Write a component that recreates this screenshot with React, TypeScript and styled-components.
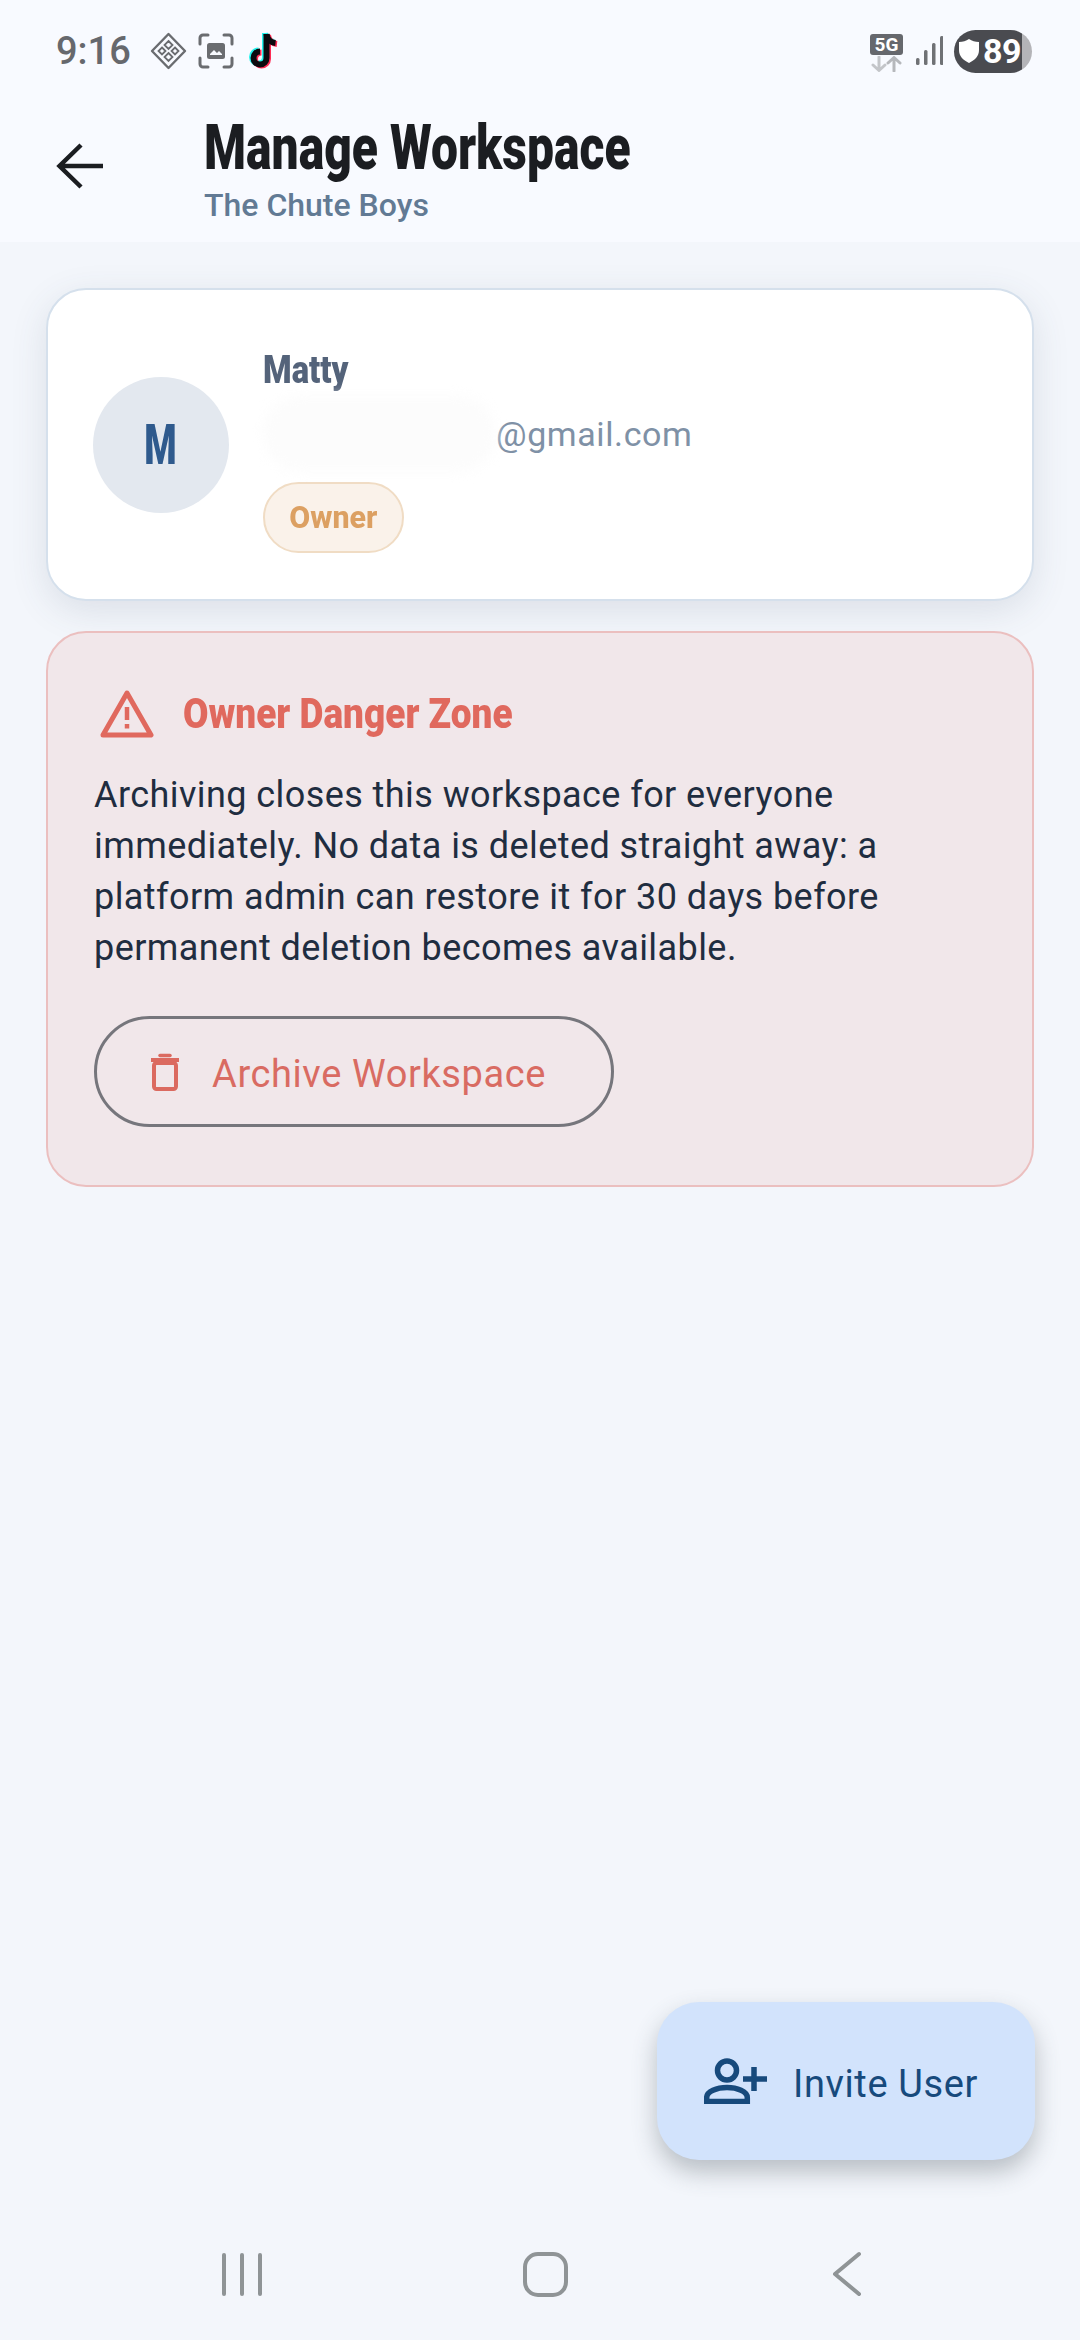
import * as React from 'react';
import {FC} from 'react';
import styled, {createGlobalStyle} from 'styled-components';

const GlobalStyle = createGlobalStyle`
  html, body {
    margin: 0;
    padding: 0;
    background: #f3f6fb;
  }
  * {
    box-sizing: border-box;
  }
`;

const StatusIcons: FC = () => (
  <StatusLeft>
    <Time>9:16</Time>
    <svg width="37" height="38" viewBox="0 0 37 38" fill="none" stroke="#6a6c70">
      <path d="M18.5 2 35 19 18.5 36 2 19Z" strokeWidth="2.4" strokeLinejoin="round" />
      <path d="M18.5 9l4 4-4 4-4-4ZM18.5 21l4 4-4 4-4-4ZM12 15.500l3.500 3.500-3.500 3.500-3.500-3.500ZM25 15.500l3.500 3.500-3.500 3.500-3.500-3.500Z" strokeWidth="1.800" />
    </svg>
    <svg width="36" height="36" viewBox="0 0 36 36" fill="none">
      <path d="M2 11V5a3 3 0 0 1 3-3h5M26 2h5a3 3 0 0 1 3 3v6M34 25v6a3 3 0 0 1-3 3h-5M10 34H5a3 3 0 0 1-3-3v-6" stroke="#6a6c70" strokeWidth="3" strokeLinecap="round" />
      <rect x="9" y="10" width="18" height="16" rx="2.500" fill="#6a6c70" />
      <path d="M12 21l4-4 3 3 2-2 3 3v1H12Z" fill="#f8faff" />
    </svg>
    <TikTokMark>
      <svg width="34" height="40" viewBox="0 0 34 40" fill="none">
        <path d="M18.500 3v24a6.500 6.500 0 1 1-6.500-6.500" stroke="#25f4ee" strokeWidth="6" transform="translate(-1.500 -1)" />
        <path d="M18.500 3c.5 5 4 8.500 9 9" stroke="#25f4ee" strokeWidth="6" transform="translate(-1.500 -1)" />
        <path d="M18.500 3v24a6.500 6.500 0 1 1-6.500-6.500" stroke="#fe2c55" strokeWidth="6" transform="translate(1.500 1)" />
        <path d="M18.500 3c.5 5 4 8.500 9 9" stroke="#fe2c55" strokeWidth="6" transform="translate(1.500 1)" />
        <path d="M18.500 3v24a6.500 6.500 0 1 1-6.500-6.500" stroke="#0b0b0f" strokeWidth="6" />
        <path d="M18.500 3c.5 5 4 8.500 9 9" stroke="#0b0b0f" strokeWidth="6" />
      </svg>
    </TikTokMark>
  </StatusLeft>
);

const NetworkIcons: FC = () => (
  <StatusRight>
    <NetworkStack>
      <FiveG>5G</FiveG>
      <svg width="33" height="16" viewBox="0 0 33 16" fill="none" strokeWidth="3" strokeLinecap="round" strokeLinejoin="round">
        <path d="M9 1v13M3 9l6 5.500L15 9" stroke="#c3c5c9" />
        <path d="M24 15V2M18 7l6-5.500L30 7" stroke="#b6b8bc" />
      </svg>
    </NetworkStack>
    <svg width="27" height="30" viewBox="0 0 27 30" fill="#6f7175">
      <rect x="0" y="22" width="3.500" height="7" rx="1.500" />
      <rect x="8" y="14" width="3.500" height="15" rx="1.500" />
      <rect x="16" y="7" width="3.500" height="22" rx="1.500" />
      <rect x="24" y="0" width="3.500" height="29" rx="1.500" />
    </svg>
    <Battery>
      <svg width="20" height="24" viewBox="0 0 20 24" fill="#fff">
        <path d="M10 0c3 2 6 3 10 3v8c0 6-4 10-10 13C4 21 0 17 0 11V3c4 0 7-1 10-3Z" />
      </svg>
      <BatteryLevel>89</BatteryLevel>
    </Battery>
  </StatusRight>
);

const App: FC = () => {
  return <Screen>
    <GlobalStyle />
    <TopArea>
      <StatusBar>
        <StatusIcons />
        <NetworkIcons />
      </StatusBar>
      <AppBar>
        <BackButton aria-label="Back">
          <svg width="48" height="46" viewBox="0 0 48 46" fill="none" stroke="#1b1d21" strokeWidth="4.500">
            <path d="M47 23H4M25 2 3.500 23 25 44" />
          </svg>
        </BackButton>
        <TitleBlock>
          <Title>Manage Workspace</Title>
          <Subtitle>The Chute Boys</Subtitle>
        </TitleBlock>
      </AppBar>
    </TopArea>

    <Content>
      <MemberCard>
        <Avatar><AvatarLetter>M</AvatarLetter></Avatar>
        <MemberInfo>
          <MemberName>Matty</MemberName>
          <EmailRow>
            <Redacted />
            <Email>@gmail.com</Email>
          </EmailRow>
          <RoleChip><RoleLabel>Owner</RoleLabel></RoleChip>
        </MemberInfo>
      </MemberCard>

      <DangerCard>
        <DangerHeading>
          <svg width="54" height="48" viewBox="0 0 54 48" fill="none" stroke="#e0695e" strokeWidth="5" strokeLinejoin="round">
            <path d="M27 3 51 45H3Z" />
            <path d="M27 17v13" strokeWidth="4.500" />
            <path d="M27 34v4.500" strokeWidth="4.500" />
          </svg>
          <DangerTitle>Owner Danger Zone</DangerTitle>
        </DangerHeading>
        <DangerText>
          Archiving closes this workspace for everyone immediately. No data is deleted straight away: a platform admin can restore it for 30 days before permanent deletion becomes available.
        </DangerText>
        <ArchiveButton>
          <svg width="30" height="38" viewBox="0 0 30 38" fill="none" stroke="#db6a60" strokeWidth="4">
            <path d="M1 7h28" />
            <path d="M10 2.500h10" strokeWidth="3.500" strokeLinecap="round" />
            <rect x="4" y="10" width="22" height="26" rx="2.500" />
          </svg>
          <ButtonLabel>Archive Workspace</ButtonLabel>
        </ArchiveButton>
      </DangerCard>
    </Content>

    <InviteButton>
      <svg width="63" height="46" viewBox="0 0 63 46" fill="none" stroke="#174a7c" strokeWidth="5.500">
        <circle cx="23" cy="12.500" r="9.500" />
        <path d="M2.700 43.500v-4c0-6 10-10 20.300-10s20.300 4 20.300 10v4Z" />
        <path d="M50 9v24M39 21h24" />
      </svg>
      <ButtonLabel>Invite User</ButtonLabel>
    </InviteButton>

    <SystemNav>
      <RecentsIcon>
        <NavLine /><NavLine /><NavLine />
      </RecentsIcon>
      <HomeIcon />
      <svg width="30" height="46" viewBox="0 0 30 46" fill="none" stroke="#8f9496" strokeWidth="4" strokeLinecap="round" strokeLinejoin="round">
        <path d="M27 3 3 23l24 20" />
      </svg>
    </SystemNav>
  </Screen>
}

export default App;

const sans = `Roboto, "Liberation Sans", sans-serif`;

const Screen = styled.div`
  position: relative;
  display: flex;
  flex-direction: column;
  width: 1080px;
  height: 2340px;
  overflow: hidden;
  background: #f3f6fb;
  font-family: ${sans};
`;

const TopArea = styled.header`
  height: 242px;
  background: #f8faff;
`;

const StatusBar = styled.div`
  display: flex;
  justify-content: space-between;
  align-items: center;
  height: 102px;
  padding: 0 48px 0 56px;
`;

const StatusLeft = styled.div`
  display: flex;
  align-items: center;
  gap: 11px;
`;

const Time = styled.span`
  width: 83px;
  font-size: 38px;
  font-weight: 500;
  color: #66686d;
`;

const TikTokMark = styled.span`
  display: flex;
  margin-left: 3px;
`;

const StatusRight = styled.div`
  display: flex;
  align-items: center;
  gap: 11px;
`;

const NetworkStack = styled.div`
  display: flex;
  flex-direction: column;
  align-items: center;
  gap: 1px;
  margin-top: 3px;
  margin-right: 2px;
`;

const FiveG = styled.span`
  width: 33px;
  height: 21px;
  border-radius: 3px;
  background: #66686d;
  color: #fff;
  font-size: 19px;
  font-weight: 700;
  line-height: 21px;
  text-align: center;
`;

const Battery = styled.div`
  display: flex;
  align-items: center;
  gap: 4px;
  width: 78px;
  height: 43px;
  padding-left: 5px;
  border-radius: 22px;
  background: linear-gradient(to right, #4a4b50 87%, #b4b4b8 87%);
`;

const BatteryLevel = styled.span`
  color: #fff;
  font-size: 34px;
  font-weight: 700;
  letter-spacing: -0.5px;
`;

const AppBar = styled.div`
  display: flex;
  align-items: flex-start;
  padding-left: 56px;
`;

const BackButton = styled.div`
  display: flex;
  width: 148px;
  padding-top: 41px;
`;

const TitleBlock = styled.div`
  display: flex;
  flex-direction: column;
  padding-top: 11px;
`;

// no condensed family is installed, so the heading faces are narrowed by hand
const Title = styled.h1`
  margin: 0;
  font-size: 63px;
  font-weight: 900;
  line-height: 70px;
  white-space: nowrap;
  color: #1b1d21;
  transform: scaleX(0.762);
  transform-origin: left center;
`;

const Subtitle = styled.span`
  margin-top: 3px;
  font-size: 32px;
  font-weight: 500;
  line-height: 38px;
  color: #627a94;
`;

const Content = styled.main`
  display: flex;
  flex: 1;
  flex-direction: column;
  gap: 30px;
  padding: 46px 46px 0;
`;

const MemberCard = styled.section`
  display: flex;
  align-items: center;
  gap: 34px;
  height: 313px;
  padding-left: 45px;
  border: 2px solid #d5e0ec;
  border-radius: 40px;
  background: #fff;
  box-shadow: 0 10px 36px rgba(60, 80, 100, 0.13);
`;

const Avatar = styled.div`
  display: flex;
  align-items: center;
  justify-content: center;
  width: 136px;
  height: 136px;
  border-radius: 50%;
  background: #e3e8ef;
`;

const AvatarLetter = styled.span`
  font-size: 56px;
  font-weight: 900;
  color: #2f5a8d;
  transform: scaleX(0.66);
`;

const MemberInfo = styled.div`
  display: flex;
  flex-direction: column;
  align-items: flex-start;
  padding-top: 11px;
`;

const MemberName = styled.span`
  font-size: 38px;
  font-weight: 900;
  line-height: 44px;
  color: #54637a;
  transform: scaleX(0.86);
  transform-origin: left center;
`;

const EmailRow = styled.div`
  display: flex;
  align-items: center;
  height: 84px;
`;

const Redacted = styled.span`
  width: 233px;
  height: 76px;
  border-radius: 38px;
  background: #fcfcfc;
  filter: blur(6px);
`;

const Email = styled.span`
  font-size: 34px;
  letter-spacing: 0.6px;
  color: #7f91a6;
`;

const RoleChip = styled.span`
  display: flex;
  align-items: center;
  height: 71px;
  margin-top: 6px;
  padding: 0 22px;
  border: 2px solid #f0dcc4;
  border-radius: 36px;
  background: #faf2ea;
`;

const RoleLabel = styled.span`
  font-size: 32px;
  font-weight: 800;
  color: #dca062;
  transform: scaleX(0.95);
`;

const DangerCard = styled.section`
  display: flex;
  flex-direction: column;
  align-items: flex-start;
  height: 556px;
  padding: 56px 46px 0;
  border: 2px solid #ebbfbf;
  border-radius: 40px;
  background: #f1e7ea;
`;

const DangerHeading = styled.div`
  display: flex;
  align-items: center;
  gap: 29px;
  padding-left: 6px;
`;

const DangerTitle = styled.h2`
  margin: 0;
  font-size: 42px;
  font-weight: 900;
  white-space: nowrap;
  color: #e0695e;
  transform: scaleX(0.88);
  transform-origin: left center;
`;

const DangerText = styled.p`
  margin: 32px 0 0;
  width: 830px;
  font-size: 36px;
  letter-spacing: 0.43px;
  line-height: 51px;
  color: #1f2d40;
`;

const ArchiveButton = styled.button`
  display: flex;
  align-items: center;
  gap: 32px;
  width: 520px;
  height: 111px;
  margin-top: 42px;
  padding: 0 0 0 53px;
  border: 3px solid #76767c;
  border-radius: 56px;
  background: transparent;
  font-family: ${sans};
  font-size: 38px;
  letter-spacing: 0.6px;
  white-space: nowrap;
  color: #d96b62;
`;

const ButtonLabel = styled.span`
  padding-top: 5px;
`;

const InviteButton = styled.button`
  position: absolute;
  left: 657px;
  top: 2002px;
  display: flex;
  align-items: center;
  gap: 26px;
  width: 378px;
  height: 158px;
  padding: 0 0 0 47px;
  border: none;
  border-radius: 42px;
  background: #d2e3fc;
  box-shadow: 0 12px 24px rgba(60, 70, 80, 0.32);
  font-family: ${sans};
  font-size: 38px;
  letter-spacing: 0.6px;
  color: #174a7c;
`;

const SystemNav = styled.nav`
  display: flex;
  align-items: center;
  justify-content: space-between;
  height: 46px;
  margin-bottom: 43px;
  padding: 0 218px 0 222px;
`;

const RecentsIcon = styled.div`
  display: flex;
  gap: 14px;
`;

const NavLine = styled.span`
  width: 4px;
  height: 43px;
  border-radius: 2px;
  background: #8f9496;
`;

const HomeIcon = styled.span`
  width: 45px;
  height: 45px;
  margin-right: 4px;
  border: 4px solid #8f9496;
  border-radius: 15px;
`;
